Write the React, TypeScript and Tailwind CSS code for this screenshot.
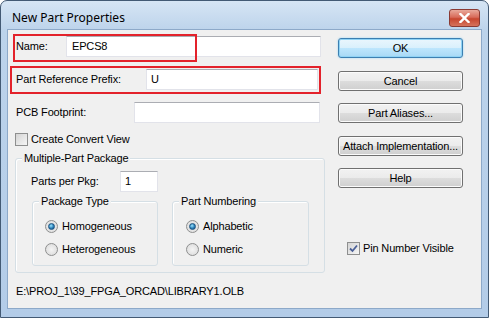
import React from 'react';

const TextBox: React.FC<{ value?: string; className?: string }> = ({ value, className = '' }) => (
  <div className={`h-[21px] bg-white border border-[#e2e3ea] border-t-[#abadb3] flex items-center px-[4px] ${className}`}>
    {value}
  </div>
);

const Button: React.FC<{ label: string; primary?: boolean; className?: string }> = ({ label, primary, className = '' }) => (
  <div
    className={`w-[125px] h-[20px] rounded-[3px] border flex items-center justify-center ${
      primary
        ? 'border-[#3c7fb1] bg-[linear-gradient(#eaf6fd,#d9f0fc_50%,#bee6fd_50%,#a7d9f5)] shadow-[inset_0_0_0_1px_#8fd3f5,0_0_2px_#8fd3f5]'
        : 'border-[#707070] bg-[linear-gradient(#f2f2f2,#ebebeb_50%,#dddddd_50%,#cfcfcf)] shadow-[inset_0_0_0_1px_#fbfbfb]'
    } ${className}`}
  >
    {label}
  </div>
);

const CheckBox: React.FC<{ checked?: boolean; label: string; className?: string }> = ({ checked, label, className = '' }) => (
  <div className={`flex items-center h-[13px] ${className}`}>
    <div className="w-[13px] h-[13px] border border-[#8e8f8f] bg-[linear-gradient(135deg,#d4d4d4,#f6f6f6)] flex items-center justify-center shrink-0">
      {checked && (
        <svg width="9" height="9" viewBox="0 0 9 9">
          <path d="M1 4.5 L3.5 7 L8 1.5" fill="none" stroke="#4a5f97" strokeWidth="1.8" />
        </svg>
      )}
    </div>
    <span className="ml-[3px]">{label}</span>
  </div>
);

const Radio: React.FC<{ checked?: boolean; label: string; className?: string }> = ({ checked, label, className = '' }) => (
  <div className={`flex items-center h-[13px] ${className}`}>
    <div className="w-[13px] h-[13px] rounded-full border border-[#8e8f8f] bg-[radial-gradient(circle,#f4f4f4,#d8d8d8)] flex items-center justify-center shrink-0">
      {checked && (
        <div className="w-[7px] h-[7px] rounded-full border border-[#1c5380] bg-[radial-gradient(circle_at_40%_35%,#9ce6ff,#2b7fb8_55%,#104d7c)]" />
      )}
    </div>
    <span className="ml-[4px]">{label}</span>
  </div>
);

const GroupBox: React.FC<{ label: string; className?: string; children?: React.ReactNode }> = ({ label, className = '', children }) => (
  <div className={`relative border border-[#d5dfe5] rounded-[3px] shadow-[inset_1px_1px_0_#fff] ${className}`}>
    <span className="absolute -top-[7px] left-[6px] bg-[#f0f0f0] px-[2px] leading-[13px]">{label}</span>
    {children}
  </div>
);

export default function App() {
  return (
    <div className="relative w-[489px] h-[318px] bg-white font-['Liberation_Sans',Arial,sans-serif] text-[11px] leading-[13px] tracking-[-0.15px] text-black">
      <div className="h-full flex flex-col border border-[#435a74] rounded-t-[7px] bg-[linear-gradient(#d6e5f4,#bcd3eb_30px,#b3cce8)]">
        {/* title bar */}
        <div className="h-[28px] flex items-start justify-between shrink-0">
          <span className="ml-[11px] mt-[9px] font-['Noto_Sans',sans-serif] text-[12px] leading-[16px] tracking-normal text-black">
            New Part Properties
          </span>
          <div className="mt-[8px] mr-[8px] w-[31px] h-[18px] rounded-[3px] border border-[#8a3a33] bg-[linear-gradient(#e9a99b,#d86b5a_45%,#c7462f_55%,#d6735c)] flex items-center justify-center">
            <svg width="11" height="10" viewBox="0 0 11 10">
              <path d="M1.5 1 L9.5 9 M9.5 1 L1.5 9" stroke="#fff" strokeWidth="2.4" strokeLinecap="square" />
            </svg>
          </div>
        </div>

        <div className="flex-1 flex px-[6px] pb-[8px]">
          {/* client area */}
          <div className="flex-1 flex border border-[#8da9c9] bg-[#f0f0f0]">
            {/* left column */}
            <div className="w-[320px] pl-[7px] flex flex-col">
              <div className="mt-[6px] flex items-center">
                <span className="w-[51px] pl-[1px]">Name:</span>
                <TextBox value="EPCS8" className="w-[255px] pl-[5px]" />
              </div>
              <div className="mt-[12px] flex items-center">
                <span className="w-[131px] pl-[1px]">Part Reference Prefix:</span>
                <TextBox value="U" className="w-[172px]" />
              </div>
              <div className="mt-[12px] flex items-center">
                <span className="w-[119px] pl-[1px]">PCB Footprint:</span>
                <TextBox className="w-[186px]" />
              </div>
              <CheckBox label="Create Convert View" className="mt-[10px]" />

              <GroupBox label="Multiple-Part Package" className="mt-[12px] w-[310px] h-[115px]">
                <div className="mt-[12px] pl-[15px] flex items-center">
                  <span className="w-[89px]">Parts per Pkg:</span>
                  <TextBox value="1" className="w-[38px] h-[20px]" />
                </div>
                <div className="mt-[9px] pl-[16px] flex gap-[14px]">
                  <GroupBox label="Package Type" className="w-[126px] h-[65px]">
                    <Radio checked label="Homogeneous" className="mt-[18px] pl-[12px]" />
                    <Radio label="Heterogeneous" className="mt-[10px] pl-[12px]" />
                  </GroupBox>
                  <GroupBox label="Part Numbering" className="w-[137px] h-[65px]">
                    <Radio checked label="Alphabetic" className="mt-[18px] pl-[13px]" />
                    <Radio label="Numeric" className="mt-[10px] pl-[13px]" />
                  </GroupBox>
                </div>
              </GroupBox>

              <span className="mt-[12px] pl-[1px]">E:\PROJ_1\39_FPGA_ORCAD\LIBRARY1.OLB</span>
            </div>

            {/* right column */}
            <div className="ml-[10px] pt-[8px] flex flex-col">
              <Button primary label="OK" />
              <Button label="Cancel" className="mt-[13px]" />
              <Button label="Part Aliases..." className="mt-[12px]" />
              <Button label="Attach Implementation..." className="mt-[13px]" />
              <Button label="Help" className="mt-[12px]" />
              <CheckBox checked label="Pin Number Visible" className="mt-[54px] ml-[9px]" />
            </div>
          </div>
        </div>
      </div>

      {/* annotation highlights */}
      <div className="absolute left-[13px] top-[34px] w-[184px] h-[28px] border-2 border-[#e3222b]" />
      <div className="absolute left-[10px] top-[66px] w-[311px] h-[28px] border-2 border-[#e3222b]" />
    </div>
  );
}
